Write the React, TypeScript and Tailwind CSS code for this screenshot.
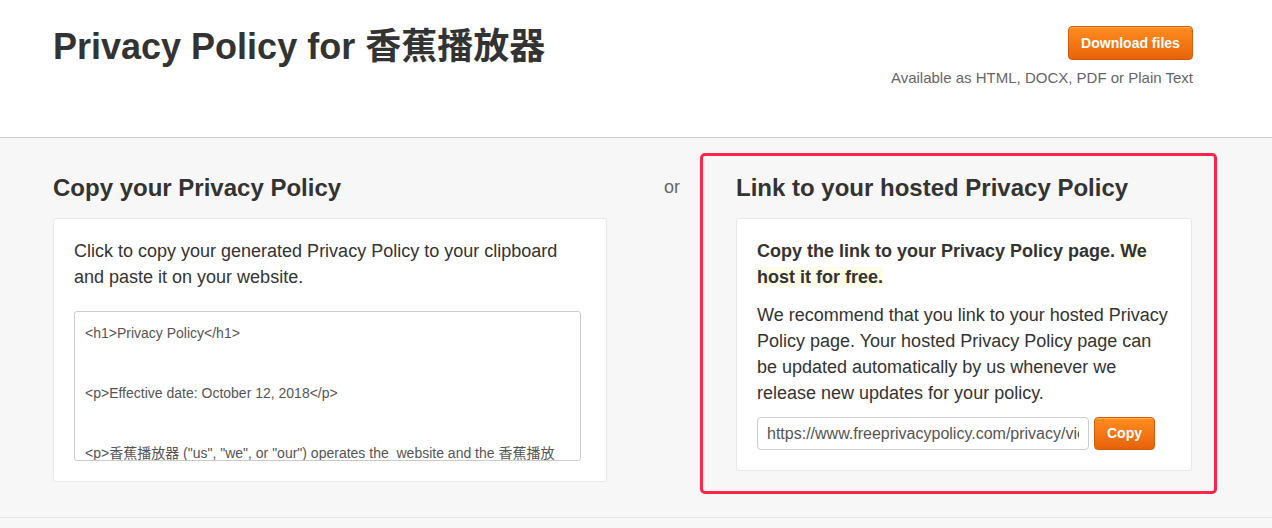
const policyText = `<h1>Privacy Policy</h1>


<p>Effective date: October 12, 2018</p>


<p>香蕉播放器 ("us", "we", or "our") operates the  website and the 香蕉播放器 mobile application (the "Service").</p>`;

const OrangeButton = ({ label, className }: { label: string; className: string }) => (
  <button
    className={`rounded-[4px] border border-[#d35c0a] bg-gradient-to-b from-[#ff8d1e] to-[#e7620b] text-[14px] font-bold text-white shadow-[inset_0_1px_0_rgba(255,255,255,0.25)] ${className}`}
  >
    {label}
  </button>
);

export default function App() {
  return (
    <div className="min-h-screen bg-[#f7f7f7] font-['Liberation_Sans','Noto_Sans_CJK_SC',sans-serif] text-[#333]">
      <header className="h-[138px] border-b border-[#cccccc] bg-white">
        <div className="ml-[53px] flex w-[1140px] items-start justify-between pt-[26px]">
          <h1 className="mt-[1px] text-[36px] leading-[40px] font-bold">
            Privacy Policy for 香蕉播放器
          </h1>
          <div className="flex flex-col items-end">
            <OrangeButton label="Download files" className="h-[34px] w-[125px]" />
            <p className="mt-[8px] text-[15px] leading-[20px] text-[#666]">
              Available as HTML, DOCX, PDF or Plain Text
            </p>
          </div>
        </div>
      </header>

      <main className="flex h-[380px] border-b border-[#e6e6e6] pt-[15px] pl-[53px]">
        <section className="w-[554px] pt-[20px]">
          <h2 className="text-[24px] leading-[30px] font-bold">Copy your Privacy Policy</h2>
          <div className="mt-[15px] rounded-[3px] border border-[#e8e8e8] bg-white px-[20px] pt-[19px] pb-[20px]">
            <p className="text-[18px] leading-[26px]">
              Click to copy your generated Privacy Policy to your clipboard and paste it on your website.
            </p>
            <textarea
              readOnly
              value={policyText}
              className="mt-[21px] block h-[150px] w-[507px] resize-none overflow-hidden rounded-[3px] border border-[#cccccc] bg-white pt-[11px] pr-[24px] pl-[10px] text-[14px] leading-[20px] text-[#555] outline-none"
            />
          </div>
        </section>

        <div className="w-[93px] pt-[21px] pl-[57px] text-[18px] leading-[26px] text-[#666]">or</div>

        <section className="h-[341px] w-[517px] rounded-[5px] border-[3px] border-[#ff2449] pt-[17px] pr-[22px] pb-[20px] pl-[33px]">
          <h2 className="text-[24px] leading-[30px] font-bold">Link to your hosted Privacy Policy</h2>
          <div className="mt-[15px] rounded-[3px] border border-[#e8e8e8] bg-white px-[20px] pt-[19px] pb-[20px]">
            <p className="text-[18px] leading-[26px] font-bold">
              Copy the link to your Privacy Policy page.{" "}
              <span className="bg-[#fefde8]">We host it for free.</span>
            </p>
            <p className="mt-[12px] text-[18px] leading-[26px]">
              We recommend that you link to your hosted Privacy Policy page. Your hosted Privacy Policy page can be
              updated automatically by us whenever we release new updates for your policy.
            </p>
            <div className="mt-[11px] flex gap-[5px]">
              <input
                readOnly
                value="https://www.freeprivacypolicy.com/privacy/view/3b1c2e7a"
                className="h-[33px] w-[332px] rounded-[4px] border border-[#cccccc] bg-white px-[9px] text-[16px] text-[#555] outline-none"
              />
              <OrangeButton label="Copy" className="h-[33px] w-[61px]" />
            </div>
          </div>
        </section>
      </main>
    </div>
  );
}
